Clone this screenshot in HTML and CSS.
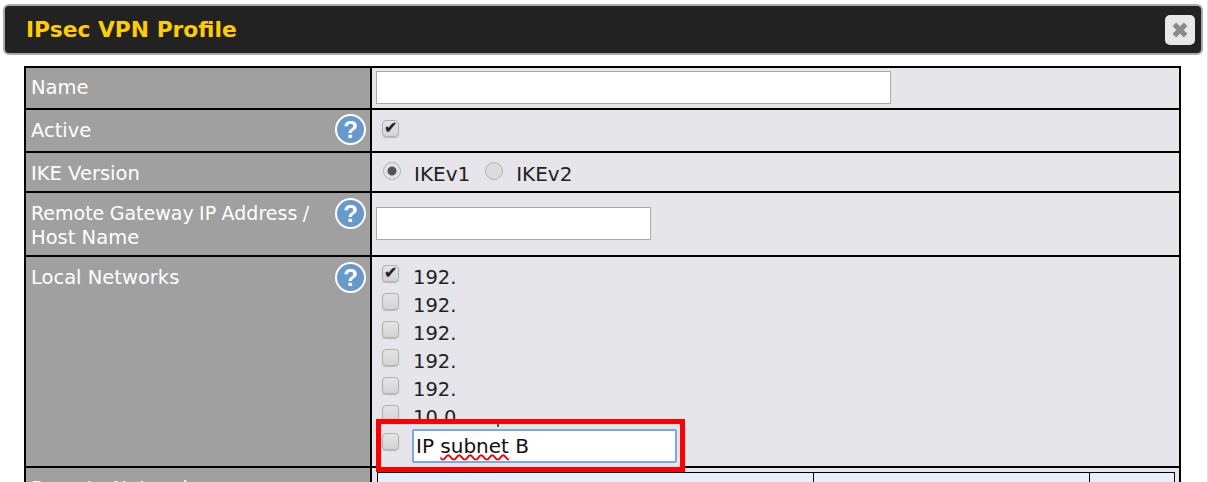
FILE: index.html
```html
<!DOCTYPE html>
<html lang="en">
<head>
    <meta charset="UTF-8">
    <title>IPsec VPN Profile</title>
    <link rel="stylesheet" href="styles.css">
</head>
<body>
    <div class="dialog">
        <div class="title-bar">
            <h1>IPsec VPN Profile</h1>
            <button class="close-btn" type="button">
                <svg width="18" height="18" viewBox="0 0 16 16"><path d="M3 3l10 10M13 3L3 13" stroke="#8a8a8a" stroke-width="4.4" fill="none"/></svg>
            </button>
        </div>
        <div class="form-grid">
            <div class="label row-name"><span>Name</span></div>
            <div class="field row-name"><input class="text-input name-input" type="text"></div>

            <div class="label row-active"><span>Active</span><i class="help">?</i></div>
            <div class="field row-active"><span class="check on"></span></div>

            <div class="label row-ike"><span>IKE Version</span></div>
            <div class="field row-ike ike-options">
                <span class="radio on"></span><span class="opt-text">IKEv1</span>
                <span class="radio"></span><span class="opt-text">IKEv2</span>
            </div>

            <div class="label row-gateway"><span><span class="tight">Remote Gateway IP Address /</span> Host Name</span><i class="help">?</i></div>
            <div class="field row-gateway"><input class="text-input gateway-input" type="text"></div>

            <div class="label row-local"><span>Local Networks</span><i class="help">?</i></div>
            <div class="field row-local local-list">
                <div class="net-row"><span class="check on"></span><span class="opt-text">192.</span></div>
                <div class="net-row"><span class="check"></span><span class="opt-text">192.</span></div>
                <div class="net-row"><span class="check"></span><span class="opt-text">192.</span></div>
                <div class="net-row"><span class="check"></span><span class="opt-text">192.</span></div>
                <div class="net-row"><span class="check"></span><span class="opt-text">192.</span></div>
                <div class="net-row"><span class="check"></span><span class="opt-text">10.0</span></div>
                <div class="callout">
                    <span class="stray"></span>
                    <span class="check"></span>
                    <div class="callout-input">IP <span class="misspelt">subnet</span> B</div>
                </div>
            </div>

            <div class="label row-remote"><span>Remote Networks</span></div>
            <div class="field row-remote">
                <div class="remote-table">
                    <div class="remote-head">Network</div>
                    <div class="remote-head">Subnet Mask</div>
                    <div class="remote-head"></div>
                </div>
            </div>
        </div>
    </div>
</body>
</html>
```

FILE: styles.css
```css
* {
    box-sizing: border-box;
    margin: 0;
    padding: 0;
}

html, body {
    height: 482px;
    overflow: hidden;
}

body {
    font-family: "DejaVu Sans", sans-serif;
    background: white;
    color: #222;
    border-right: 1px solid #e2e2e2;
}

.dialog {
    padding: 4px 4px 0 3px;
}

.title-bar {
    display: flex;
    align-items: center;
    justify-content: space-between;
    height: 51px;
    padding: 0 6px 0 21px;
    background: #222;
    border: 2px solid #aaa;
    border-radius: 6px;
}

.title-bar h1 {
    font-size: 21.8px;
    font-weight: bold;
    color: #fc0;
}

.close-btn {
    display: flex;
    align-items: center;
    justify-content: center;
    width: 30px;
    height: 30px;
    margin-top: 1px;
    background: #e8e8e8;
    border: none;
    border-radius: 5px;
}

.form-grid {
    display: grid;
    grid-template-columns: 344px 809px;
    grid-template-rows: 42px 43px 40px 64px 211px 40px;
    width: 1157px;
    margin: 11px 0 0 21px;
    background: #000;
    border: solid #000;
    border-width: 2px 2px 0 2px;
}

.label {
    display: flex;
    justify-content: space-between;
    padding: 9px 4px 0 5px;
    margin: 0 0 2px;
    background: #a0a0a0;
    color: white;
    font-size: 19.5px;
    line-height: 24px;
}

.row-name.label, .row-gateway.label {
    padding-top: 8px;
}

.row-gateway .help {
    margin-top: -3px;
}

.tight {
    font-size: 19px;
    word-spacing: -0.6px;
}

.field {
    margin: 0 0 2px 2px;
    background: #e6e5ea;
    font-size: 19.5px;
}

.help {
    flex: none;
    width: 31px;
    height: 31px;
    margin-top: -4px;
    border: 2px solid white;
    border-radius: 50%;
    background: #6699cc;
    color: white;
    font: bold 24px/27px "Liberation Sans", sans-serif;
    text-align: center;
}

.row-active .help {
    margin-top: -5px;
}

.text-input {
    display: block;
    height: 33px;
    background: white;
    border: 1px solid #aaa;
}

.name-input {
    width: 515px;
    margin: 3px 0 0 4px;
}

.gateway-input {
    width: 275px;
    margin: 14px 0 0 4px;
}

.check {
    display: inline-block;
    position: relative;
    flex: none;
    width: 17px;
    height: 17px;
    background: linear-gradient(#e4e4e4, #d4d4d4);
    border: 1px solid #b0b0b0;
    border-radius: 4px;
    box-shadow: 0 1px 1px #bbb;
}

.check.on::after {
    content: "✔";
    position: absolute;
    left: 1px;
    top: -1px;
    font: 16px/16px "DejaVu Sans", sans-serif;
    color: #222;
    -webkit-text-stroke: 0.3px #222;
}

.row-active .check {
    margin: 10px 0 0 10px;
}

.radio {
    display: inline-block;
    flex: none;
    width: 18px;
    height: 18px;
    background: #dcdcdc;
    border: 1px solid #b4b4b4;
    border-radius: 50%;
}

.radio.on {
    background: radial-gradient(circle, #555 0 4px, #e4e4e4 5px);
}

.ike-options {
    display: flex;
    align-items: center;
    padding-left: 11px;
}

.ike-options .radio {
    margin-top: -3px;
}

.ike-options .opt-text {
    margin-top: 4px;
    margin-left: 13px;
    font-size: 20px;
}

.opt-text {
    margin-left: 14px;
    margin-right: 15px;
    line-height: 24px;
}

.local-list {
    position: relative;
    padding-top: 7px;
}

.net-row {
    display: flex;
    align-items: center;
    height: 28px;
    padding-left: 10px;
}

.net-row .check {
    margin-top: -9px;
}

.net-row .opt-text {
    margin-left: 14px;
}

.callout {
    position: absolute;
    left: 4px;
    top: 162px;
    display: flex;
    align-items: center;
    width: 309px;
    height: 53px;
    padding-left: 1px;
    background: #e6e5ea;
    border: 5px solid #f00;
}

.callout .check {
    margin-top: -8px;
}

.stray {
    position: absolute;
    left: 116px;
    top: 0;
    width: 2px;
    height: 3px;
    background: #555;
}

.callout-input {
    width: 265px;
    height: 34px;
    margin-left: 13px;
    padding-left: 2px;
    background: white;
    border: 2px solid #7aa7ea;
    border-radius: 2px;
    color: #111;
    font-size: 20px;
    line-height: 30px;
}

.misspelt {
    text-decoration: underline wavy #e00;
    text-decoration-thickness: 1.5px;
}

.remote-table {
    display: grid;
    grid-template-columns: 435px 275px 84px;
    gap: 1px;
    width: 798px;
    height: 40px;
    margin: 4px 0 0 5px;
    background: #000;
    border: 1px solid #000;
}

.remote-head {
    padding: 6px 0 0 7px;
    background: #e6f0fc;
    line-height: 24px;
}
```
